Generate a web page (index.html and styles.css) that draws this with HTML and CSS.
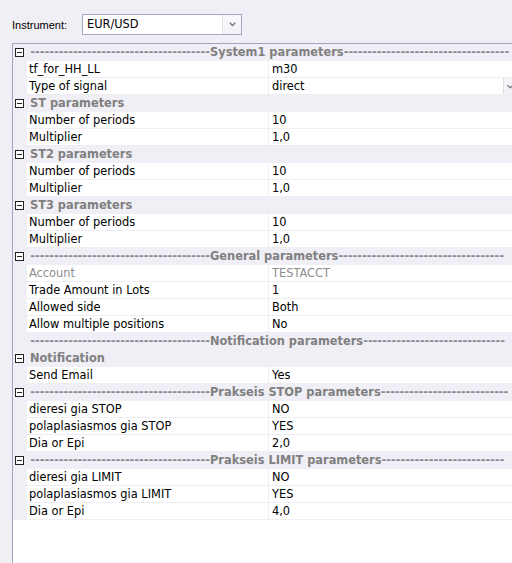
FILE: index.html
```html
<!DOCTYPE html>
<html>
<head>
<meta charset="utf-8">
<link rel="stylesheet" href="styles.css">
</head>
<body>
<div class="toolbar">
  <span class="inst-label">Instrument:</span>
  <div class="combo">
    <span class="combo-text">EUR/USD</span>
    <span class="combo-btn"><svg width="7" height="5" viewBox="0 0 7 5"><path d="M0.8 0.8 L3.5 3.5 L6.2 0.8" fill="none" stroke="#75758c" stroke-width="1.5"/></svg></span>
  </div>
</div>
<div class="grid">
  <div class="row cat"><span class="gutter"><span class="toggle"></span></span><span class="dash-left"><span>--------------------------------------</span></span><span class="title">System1 parameters</span><span class="dash-right">-----------------------------------</span></div>
  <div class="row prop"><span class="gutter"></span><span class="name">tf_for_HH_LL</span><span class="value">m30</span></div>
  <div class="row prop"><span class="gutter"></span><span class="name">Type of signal</span><span class="value"><span class="vtext">direct</span><span class="drop"><svg width="9" height="5" viewBox="0 0 9 5"><path d="M4 1 L7 4 L10 1" fill="none" stroke="#777" stroke-width="1.4"/></svg></span></span></div>
  <div class="row cat"><span class="gutter"><span class="toggle"></span></span><span class="title plain">ST parameters</span></div>
  <div class="row prop"><span class="gutter"></span><span class="name">Number of periods</span><span class="value">10</span></div>
  <div class="row prop"><span class="gutter"></span><span class="name">Multiplier</span><span class="value">1,0</span></div>
  <div class="row cat"><span class="gutter"><span class="toggle"></span></span><span class="title plain">ST2 parameters</span></div>
  <div class="row prop"><span class="gutter"></span><span class="name">Number of periods</span><span class="value">10</span></div>
  <div class="row prop"><span class="gutter"></span><span class="name">Multiplier</span><span class="value">1,0</span></div>
  <div class="row cat"><span class="gutter"><span class="toggle"></span></span><span class="title plain">ST3 parameters</span></div>
  <div class="row prop"><span class="gutter"></span><span class="name">Number of periods</span><span class="value">10</span></div>
  <div class="row prop"><span class="gutter"></span><span class="name">Multiplier</span><span class="value">1,0</span></div>
  <div class="row cat"><span class="gutter"><span class="toggle"></span></span><span class="dash-left"><span>--------------------------------------</span></span><span class="title">General parameters</span><span class="dash-right">-----------------------------------</span></div>
  <div class="row prop disabled"><span class="gutter"></span><span class="name">Account</span><span class="value">TESTACCT</span></div>
  <div class="row prop"><span class="gutter"></span><span class="name">Trade Amount in Lots</span><span class="value">1</span></div>
  <div class="row prop"><span class="gutter"></span><span class="name">Allowed side</span><span class="value">Both</span></div>
  <div class="row prop"><span class="gutter"></span><span class="name">Allow multiple positions</span><span class="value">No</span></div>
  <div class="row cat"><span class="gutter"></span><span class="dash-left"><span>--------------------------------------</span></span><span class="title">Notification parameters</span><span class="dash-right">------------------------------</span></div>
  <div class="row cat"><span class="gutter"><span class="toggle"></span></span><span class="title plain">Notification</span></div>
  <div class="row prop"><span class="gutter"></span><span class="name">Send Email</span><span class="value">Yes</span></div>
  <div class="row cat"><span class="gutter"><span class="toggle"></span></span><span class="dash-left"><span>--------------------------------------</span></span><span class="title">Prakseis STOP parameters</span><span class="dash-right">---------------------------</span></div>
  <div class="row prop"><span class="gutter"></span><span class="name">dieresi gia STOP</span><span class="value">NO</span></div>
  <div class="row prop"><span class="gutter"></span><span class="name">polaplasiasmos gia STOP</span><span class="value">YES</span></div>
  <div class="row prop"><span class="gutter"></span><span class="name">Dia or Epi</span><span class="value">2,0</span></div>
  <div class="row cat"><span class="gutter"><span class="toggle"></span></span><span class="dash-left"><span>--------------------------------------</span></span><span class="title">Prakseis LIMIT parameters</span><span class="dash-right">--------------------------</span></div>
  <div class="row prop"><span class="gutter"></span><span class="name">dieresi gia LIMIT</span><span class="value">NO</span></div>
  <div class="row prop"><span class="gutter"></span><span class="name">polaplasiasmos gia LIMIT</span><span class="value">YES</span></div>
  <div class="row prop"><span class="gutter"></span><span class="name">Dia or Epi</span><span class="value">4,0</span></div>
</div>
</body>
</html>
```

FILE: styles.css
```css
html, body {
  margin: 0;
  padding: 0;
  height: 100%;
  overflow: hidden;
}
body {
  background: #f0eff5;
  font-family: "DejaVu Sans", Verdana, sans-serif;
  font-size: 11.4px;
  color: #000;
  display: flex;
  flex-direction: column;
}
.toolbar {
  display: flex;
  align-items: center;
  padding: 14px 0 0 12px;
  height: 21px;
  flex-shrink: 0;
}
.inst-label {
  font-family: "Liberation Sans", Arial, sans-serif;
  font-size: 11px;
  width: 70px;
}
.combo {
  display: flex;
  width: 158px;
  height: 19px;
  border: 1px solid #a6a6c4;
  background: #fff;
}
.combo-text {
  flex: 1;
  padding-left: 4px;
  line-height: 19px;
}
.combo-btn {
  width: 18px;
  border-left: 1px solid #e4e4ec;
  background: linear-gradient(#fbfbfd, #f1f1f6);
  display: flex;
  align-items: center;
  justify-content: center;
}
.grid {
  margin: 8px 0 0 12px;
  border-left: 1px solid #a5a4bd;
  border-top: 1px solid #a5a4bd;
  background: #fff;
  flex: 1;
  min-height: 0;
  overflow: hidden;
}
.row {
  display: flex;
  height: 17px;
  line-height: 17px;
  white-space: nowrap;
}
.gutter {
  width: 14px;
  flex-shrink: 0;
  background: #f0eff5;
  position: relative;
}
.toggle {
  position: absolute;
  left: 2px;
  top: 4px;
  width: 7px;
  height: 7px;
  border: 1px solid #222;
  background: #fff;
}
.toggle::after {
  content: "";
  position: absolute;
  left: 1px;
  top: 3px;
  width: 5px;
  height: 1px;
  background: #222;
}
.cat {
  background: #f0eff5;
  color: #808080;
  font-weight: bold;
  overflow: hidden;
}
.cat .title {
  flex-shrink: 0;
}
.cat .title.plain {
  padding-left: 3px;
}
.dash-left {
  width: 183px;
  flex-shrink: 0;
  display: flex;
  justify-content: flex-end;
  color: #8a8a96;
}
.dash-left span {
  flex-shrink: 0;
}
.dash-right {
  color: #8a8a96;
}
.prop .name {
  width: 239px;
  height: 16px;
  line-height: 16px;
  flex-shrink: 0;
  padding-left: 2px;
  border-right: 1px solid #eeeef2;
  border-bottom: 1px solid #eeeef2;
  overflow: hidden;
}
.prop .value {
  flex: 1;
  height: 16px;
  line-height: 16px;
  padding-left: 3px;
  border-bottom: 1px solid #eeeef2;
  display: flex;
  overflow: hidden;
}
.vtext {
  flex: 1;
}
.drop {
  width: 8px;
  border-left: 1px solid #dcdce4;
  background: #f4f4f8;
  display: flex;
  align-items: center;
  overflow: hidden;
}
.disabled {
  color: #8d8d8d;
}
```
